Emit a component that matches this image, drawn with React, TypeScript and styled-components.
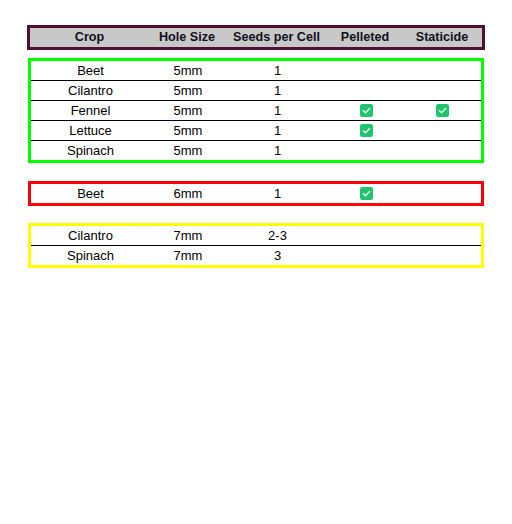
import React from "react";
import styled, { createGlobalStyle } from "styled-components";

const GlobalStyle = createGlobalStyle`
  html, body {
    margin: 0;
    padding: 0;
    background: #ffffff;
  }
  body {
    font-family: "Liberation Sans", Arial, sans-serif;
    color: #000000;
  }
`;

const Page = styled.div`
  width: 458px;
  padding: 25px 0 0 27px;
  display: flex;
  flex-direction: column;
`;

const COLUMNS = "119px 76px 103px 74px 1fr";

const HeaderBar = styled.div`
  display: grid;
  grid-template-columns: ${COLUMNS};
  height: 19px;
  align-items: center;
  background: #c8c8c8;
  border: 3px solid #4d1132;
  font-size: 12.6px;
  font-weight: bold;
  color: #10101c;
`;

const HeaderCell = styled.div`
  text-align: center;
  white-space: nowrap;
  line-height: 19px;
`;

const Group = styled.div<{ $color: string; $gap: number }>`
  margin: ${(p) => p.$gap}px 1px 0 1px;
  border: 3px solid ${(p) => p.$color};
  display: flex;
  flex-direction: column;
`;

const Row = styled.div`
  display: grid;
  grid-template-columns: ${COLUMNS};
  height: 19px;
  padding-top: 1px;
  margin-top: -1px;
  align-items: center;
  font-size: 13px;
  & + & {
    margin-top: 0;
    padding-top: 0;
    border-top: 1px solid #000000;
  }
`;

const Cell = styled.div`
  display: flex;
  justify-content: center;
  align-items: center;
  line-height: 19px;
  white-space: nowrap;
`;

const Check = () => (
  <svg width="13" height="13" viewBox="0 0 13 13" aria-hidden="true">
    <rect x="0" y="0" width="13" height="13" rx="2.2" fill="#1fc56c" />
    <polyline
      points="3.4,6.8 5.5,8.8 9.6,4.6"
      fill="none"
      stroke="#e8fff0"
      strokeWidth="1.5"
      strokeLinecap="round"
      strokeLinejoin="round"
    />
  </svg>
);

type Item = {
  crop: string;
  hole: string;
  seeds: string;
  pelleted?: boolean;
  staticide?: boolean;
};

const groups: { color: string; gap: number; items: Item[] }[] = [
  {
    color: "#00ff00",
    gap: 8,
    items: [
      { crop: "Beet", hole: "5mm", seeds: "1" },
      { crop: "Cilantro", hole: "5mm", seeds: "1" },
      { crop: "Fennel", hole: "5mm", seeds: "1", pelleted: true, staticide: true },
      { crop: "Lettuce", hole: "5mm", seeds: "1", pelleted: true },
      { crop: "Spinach", hole: "5mm", seeds: "1" },
    ],
  },
  {
    color: "#ff0000",
    gap: 18,
    items: [{ crop: "Beet", hole: "6mm", seeds: "1", pelleted: true }],
  },
  {
    color: "#ffff00",
    gap: 17,
    items: [
      { crop: "Cilantro", hole: "7mm", seeds: "2-3" },
      { crop: "Spinach", hole: "7mm", seeds: "3" },
    ],
  },
];

const headers = ["Crop", "Hole Size", "Seeds per Cell", "Pelleted", "Staticide"];

export default function App() {
  return (
    <>
      <GlobalStyle />
      <Page>
        <HeaderBar>
          {headers.map((h) => (
            <HeaderCell key={h}>{h}</HeaderCell>
          ))}
        </HeaderBar>
        {groups.map((g, gi) => (
          <Group key={gi} $color={g.color} $gap={g.gap}>
            {g.items.map((it, i) => (
              <Row key={i}>
                <Cell>{it.crop}</Cell>
                <Cell>{it.hole}</Cell>
                <Cell>{it.seeds}</Cell>
                <Cell>{it.pelleted ? <Check /> : null}</Cell>
                <Cell>{it.staticide ? <Check /> : null}</Cell>
              </Row>
            ))}
          </Group>
        ))}
      </Page>
    </>
  );
}
